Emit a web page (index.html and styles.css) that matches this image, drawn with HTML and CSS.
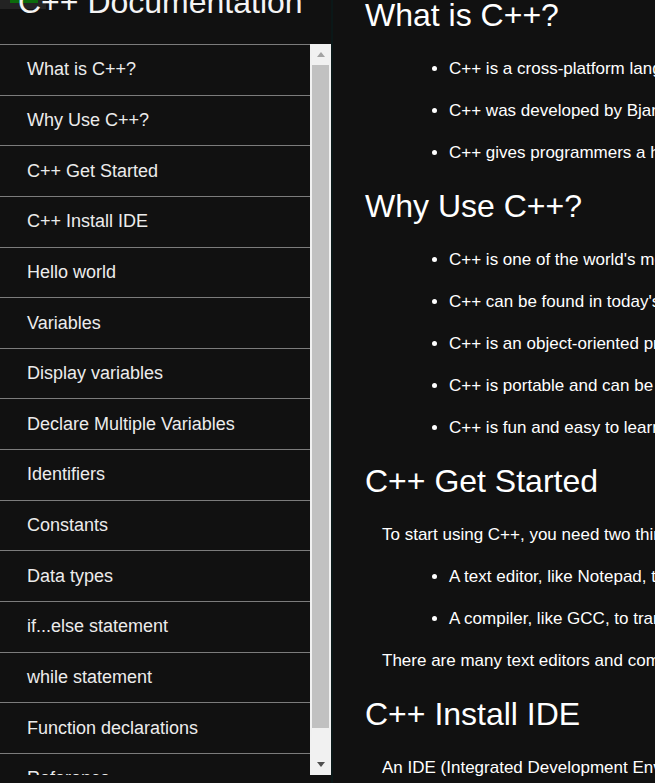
FILE: index.html
```html
<!DOCTYPE html>
<html lang="en">
<head>
<meta charset="utf-8">
<title>C++ Documentation</title>
<link rel="stylesheet" href="styles.css">
</head>
<body>
<nav class="sidebar">
  <div class="badge"><span class="badge-bar"></span></div>
  <header class="sidebar-header">
    <h1 class="sidebar-title">C++ Documentation</h1>
  </header>
  <div class="sidebar-body">
    <ul class="nav-list">
      <li class="nav-item">What is C++?</li>
      <li class="nav-item">Why Use C++?</li>
      <li class="nav-item">C++ Get Started</li>
      <li class="nav-item">C++ Install IDE</li>
      <li class="nav-item">Hello world</li>
      <li class="nav-item">Variables</li>
      <li class="nav-item">Display variables</li>
      <li class="nav-item">Declare Multiple Variables</li>
      <li class="nav-item">Identifiers</li>
      <li class="nav-item">Constants</li>
      <li class="nav-item">Data types</li>
      <li class="nav-item">if...else statement</li>
      <li class="nav-item">while statement</li>
      <li class="nav-item">Function declarations</li>
      <li class="nav-item">Reference</li>
    </ul>
    <div class="scrollbar">
      <div class="scroll-btn"><span class="arrow-up"></span></div>
      <div class="scroll-track"><div class="scroll-thumb"></div></div>
      <div class="scroll-btn"><span class="arrow-down"></span></div>
    </div>
  </div>
</nav>
<main class="content">
  <section class="doc-section">
    <h2 class="section-title first">What is C++?</h2>
    <ul class="doc-list">
      <li>C++ is a cross-platform language that can be used to create high-performance applications.</li>
      <li>C++ was developed by Bjarne Stroustrup, as an extension to the C language.</li>
      <li>C++ gives programmers a high level of control over system resources and memory.</li>
    </ul>
  </section>
  <section class="doc-section">
    <h2 class="section-title">Why Use C++?</h2>
    <ul class="doc-list">
      <li>C++ is one of the world's most popular programming languages.</li>
      <li>C++ can be found in today's operating systems, Graphical User Interfaces, and embedded systems.</li>
      <li>C++ is an object-oriented programming language which gives a clear structure to programs.</li>
      <li>C++ is portable and can be used to develop applications that can be adapted to multiple platforms.</li>
      <li>C++ is fun and easy to learn!</li>
    </ul>
  </section>
  <section class="doc-section">
    <h2 class="section-title">C++ Get Started</h2>
    <p class="doc-text">To start using C++, you need two things:</p>
    <ul class="doc-list">
      <li>A text editor, like Notepad, to write C++ code</li>
      <li>A compiler, like GCC, to translate the C++ code into a language that the computer will understand</li>
    </ul>
    <p class="doc-text">There are many text editors and compilers to choose from.</p>
  </section>
  <section class="doc-section">
    <h2 class="section-title">C++ Install IDE</h2>
    <p class="doc-text">An IDE (Integrated Development Environment) is used to edit AND compile the code.</p>
  </section>
</main>
</body>
</html>
```
FILE: styles.css
```css
html, body {
  margin: 0;
  padding: 0;
  height: 783px;
  overflow: hidden;
  background: #111111;
}

body {
  display: flex;
  font-family: "Liberation Sans", Arial, sans-serif;
  color: #ffffff;
}

.sidebar {
  position: relative;
  width: 331px;
  flex: 0 0 331px;
  border-right: 2px solid #0b1818;
  background: #111111;
  display: flex;
  flex-direction: column;
  height: 783px;
}

.badge {
  position: absolute;
  left: 0;
  top: 0;
  width: 46px;
  height: 9px;
  background: #232323;
}

.badge-bar {
  position: absolute;
  left: 10px;
  top: 0;
  width: 28px;
  height: 3px;
  background: #0c6b0c;
}

.sidebar-header {
  height: 44px;
  flex: 0 0 44px;
  position: relative;
}

.sidebar-title {
  margin: -16px 0 0 0;
  padding-left: 18px;
  font-size: 32px;
  line-height: 37px;
  font-weight: normal;
  color: #f4f4f4;
  white-space: nowrap;
}

.sidebar-body {
  display: flex;
  height: 731px;
  flex: 0 0 731px;
}

.nav-list {
  list-style: none;
  margin: 0;
  padding: 0;
  width: 310px;
  flex: 0 0 310px;
  overflow: hidden;
}

.nav-item {
  border-top: 1px solid #7c7c7c;
  padding: 14.4px 27px;
  font-size: 18px;
  line-height: 20.84px;
  color: #ececec;
  white-space: nowrap;
}

.scrollbar {
  width: 21px;
  flex: 0 0 21px;
  background: #f1f1f1;
  display: flex;
  flex-direction: column;
}

.scroll-btn {
  height: 21px;
  flex: 0 0 21px;
  display: flex;
  align-items: center;
  justify-content: center;
}

.arrow-up {
  width: 0;
  height: 0;
  border-left: 4.5px solid transparent;
  border-right: 4.5px solid transparent;
  border-bottom: 5px solid #a3a3a3;
}

.arrow-down {
  width: 0;
  height: 0;
  border-left: 4.5px solid transparent;
  border-right: 4.5px solid transparent;
  border-top: 5px solid #505050;
}

.scroll-track {
  flex: 1;
  display: flex;
  flex-direction: column;
  padding: 0 2px;
}

.scroll-thumb {
  height: 663px;
  background: #c1c1c1;
}

.content {
  flex: 1;
  min-width: 0;
  overflow: hidden;
  padding-left: 32px;
  white-space: nowrap;
}

.section-title {
  font-size: 32px;
  line-height: 37px;
  font-weight: normal;
  margin: 26px 0 25px;
  color: #ffffff;
}

.section-title.first {
  margin-top: -3px;
}

.doc-list {
  margin: 23px 0;
  padding-left: 84px;
  list-style: disc;
}

.doc-list li {
  font-size: 17px;
  line-height: 19px;
  margin: 23px 0;
}

.doc-text {
  font-size: 17px;
  line-height: 19px;
  margin: 23px 0 23px 17px;
}
```
